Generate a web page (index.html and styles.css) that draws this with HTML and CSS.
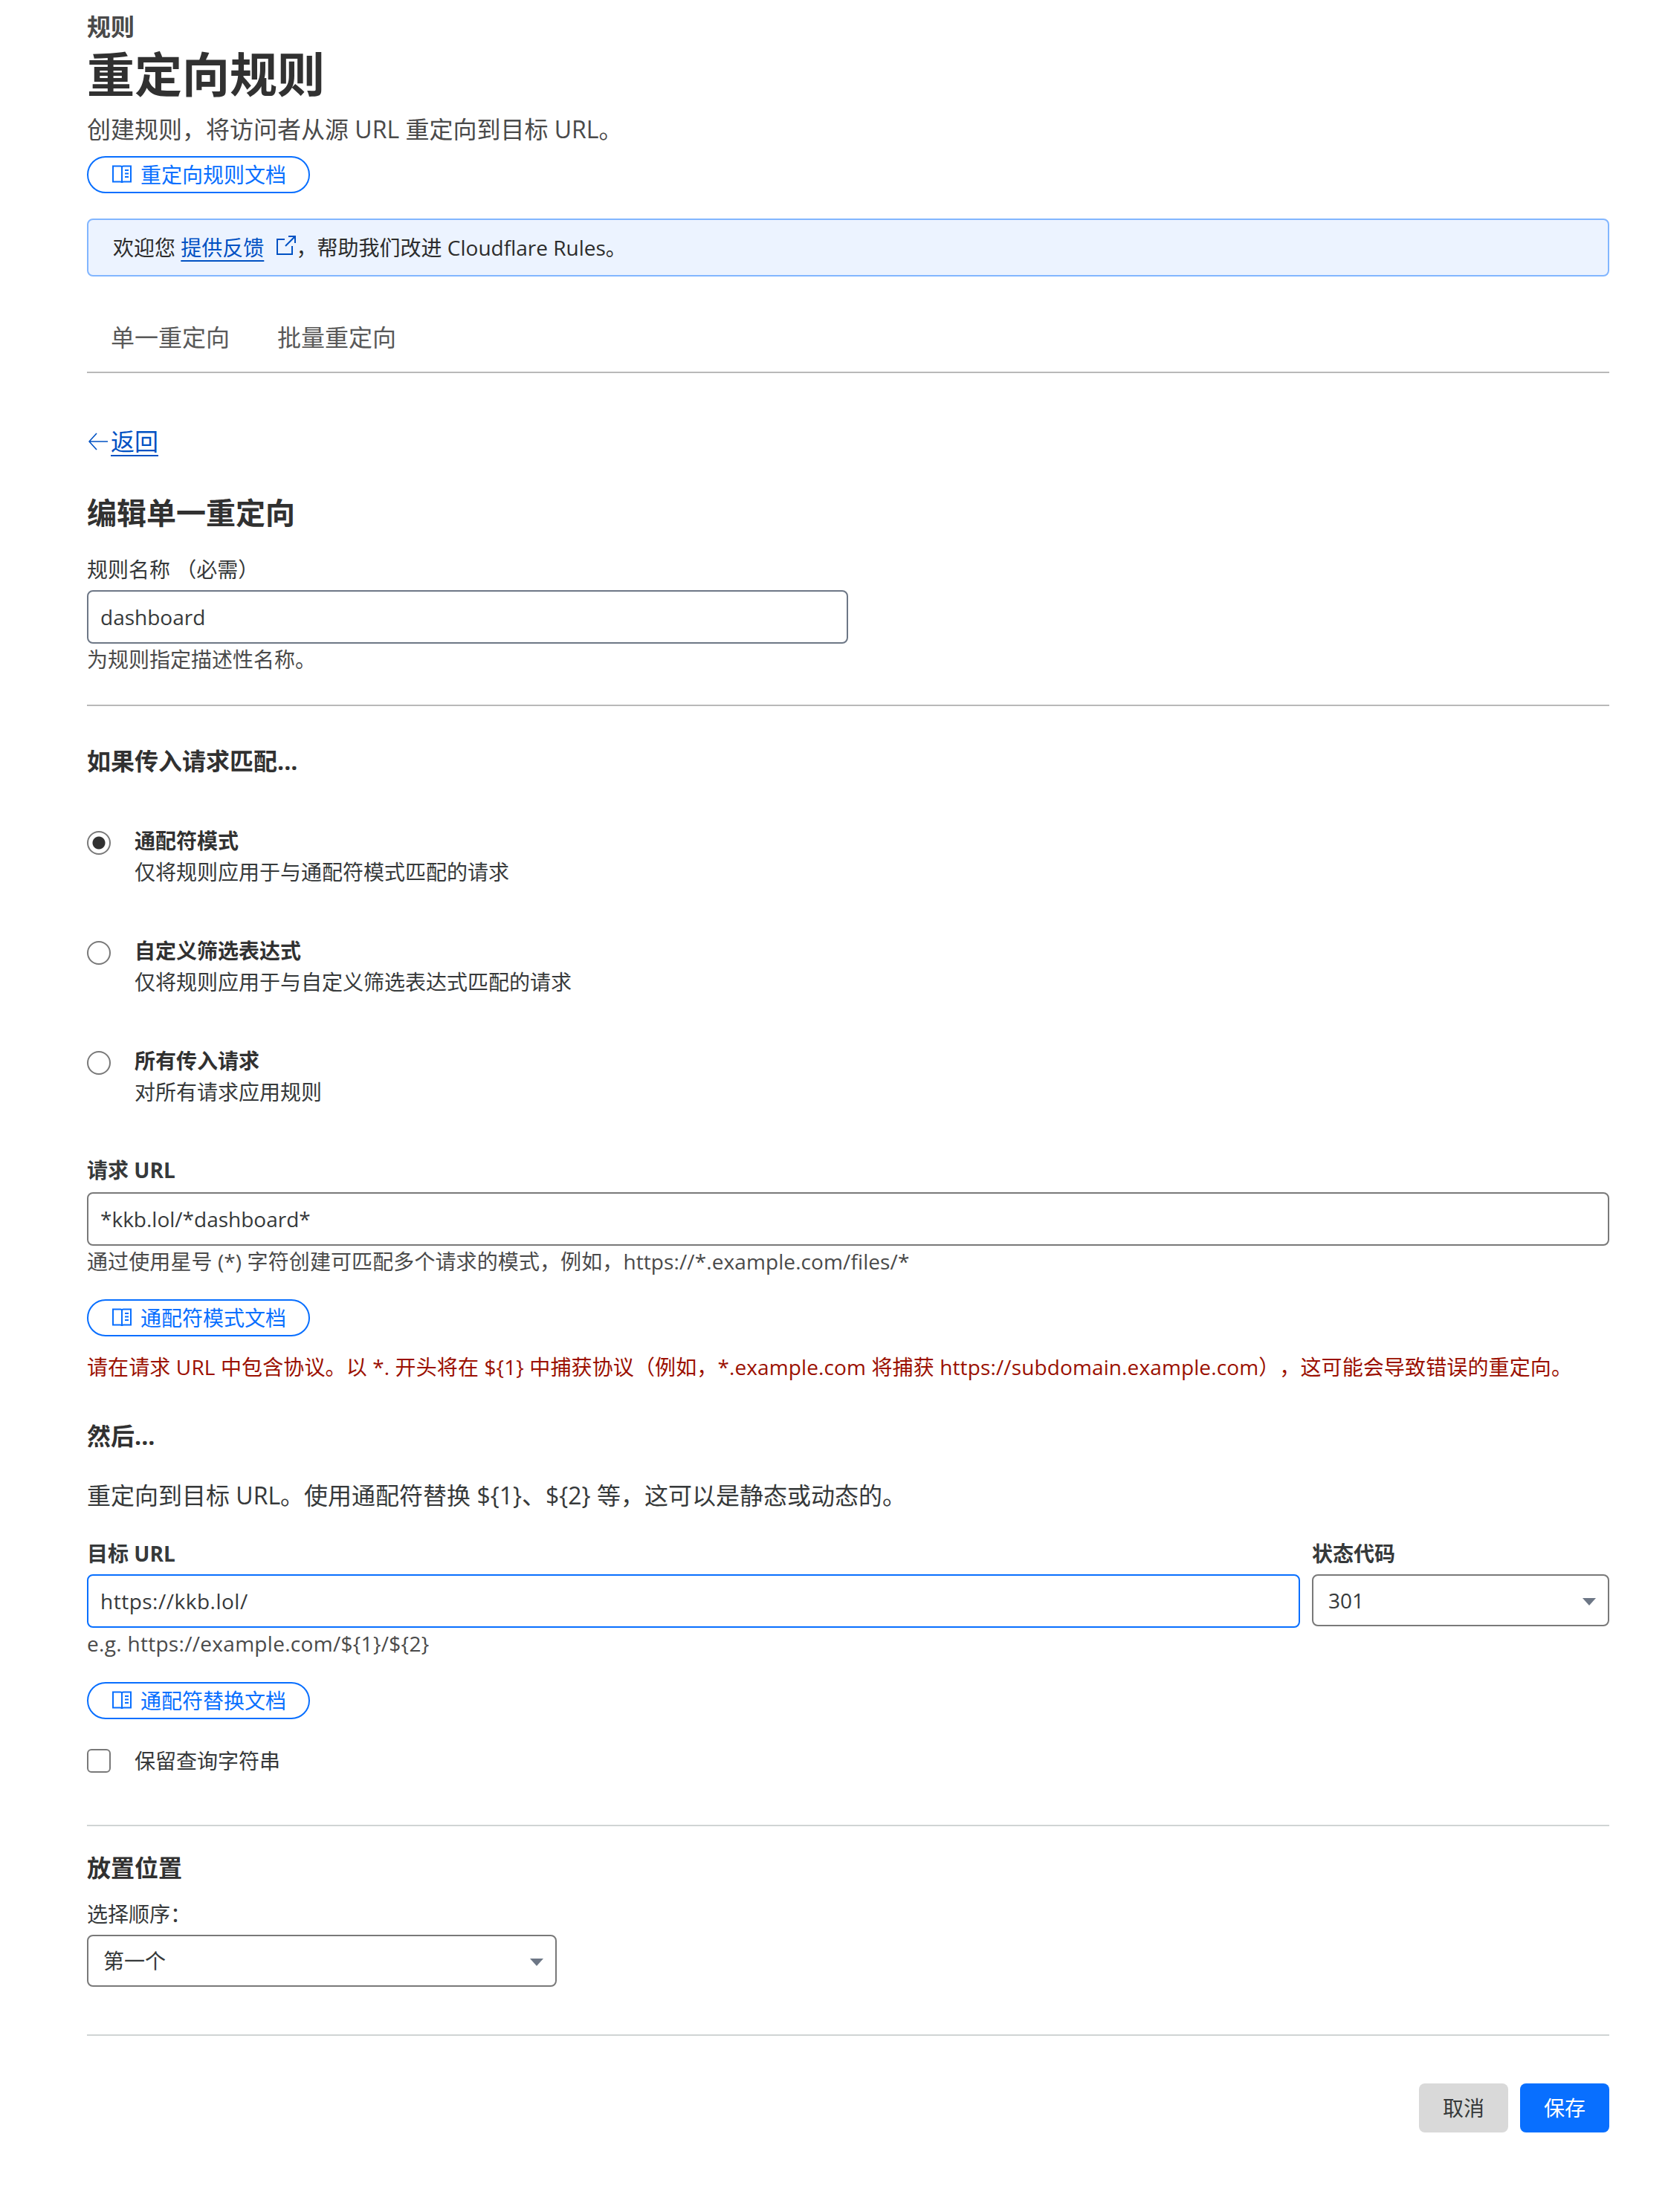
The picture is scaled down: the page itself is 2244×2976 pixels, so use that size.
FILE: index.html
```html
<!DOCTYPE html>
<html lang="zh">
<head>
    <meta charset="utf-8">
    <meta name="viewport" content="width=device-width, initial-scale=1">
    <title>重定向规则</title>
    <link rel="stylesheet" href="styles.css">
</head>
<body>
<div class="page">
    <div class="crumb">规则</div>
    <h1 class="title">重定向规则</h1>
    <p class="lead">创建规则，将访问者从源 URL 重定向到目标 URL。</p>
    <a class="pill pill-top" href="#">
        <svg class="book" viewBox="0 0 26 26"><path d="M1 1.5h10c1 0 2 .5 2 1.5 0-1 1-1.5 2-1.5h10v21H15c-1 0-2 .5-2 1.5 0-1-1-1.5-2-1.5H1zM13 3v21M17 7h5M17 11.5h5M17 16h5"/></svg>
        重定向规则文档
    </a>

    <div class="banner">
        欢迎您 <a class="link" href="#">提供反馈</a>
        <svg class="ext" viewBox="0 0 28 28"><path d="M12 6H2v20h20V15M17 2h9v9M26 2L13 15"/></svg>，帮助我们改进 Cloudflare Rules。
    </div>

    <div class="tabs">
        <span class="tab">单一重定向</span>
        <span class="tab">批量重定向</span>
    </div>

    <div class="back">
        <svg class="arrow" viewBox="0 0 26 26"><path d="M26 13H1M11 2L1 13l10 11"/></svg><a class="link" href="#">返回</a>
    </div>

    <h2 class="subtitle">编辑单一重定向</h2>

    <label class="field-label name-label">规则名称 （必需）</label>
    <input class="input name-input" type="text" value="dashboard">
    <p class="help">为规则指定描述性名称。</p>

    <hr class="rule rule-name">

    <h3 class="section">如果传入请求匹配...</h3>

    <div class="options">
        <div class="option">
            <span class="radio checked"></span>
            <div class="option-text">
                <div class="option-title">通配符模式</div>
                <div class="option-desc">仅将规则应用于与通配符模式匹配的请求</div>
            </div>
        </div>
        <div class="option">
            <span class="radio"></span>
            <div class="option-text">
                <div class="option-title">自定义筛选表达式</div>
                <div class="option-desc">仅将规则应用于与自定义筛选表达式匹配的请求</div>
            </div>
        </div>
        <div class="option">
            <span class="radio"></span>
            <div class="option-text">
                <div class="option-title">所有传入请求</div>
                <div class="option-desc">对所有请求应用规则</div>
            </div>
        </div>
    </div>

    <label class="field-label strong">请求 URL</label>
    <input class="input" type="text" value="*kkb.lol/*dashboard*">
    <p class="help help-wide">通过使用星号 (*) 字符创建可匹配多个请求的模式，例如，https://*.example.com/files/*</p>
    <a class="pill pill-mid" href="#">
        <svg class="book" viewBox="0 0 26 26"><path d="M1 1.5h10c1 0 2 .5 2 1.5 0-1 1-1.5 2-1.5h10v21H15c-1 0-2 .5-2 1.5 0-1-1-1.5-2-1.5H1zM13 3v21M17 7h5M17 11.5h5M17 16h5"/></svg>
        通配符模式文档
    </a>
    <p class="warning">请在请求 URL 中包含协议。以 *. 开头将在 ${1} 中捕获协议（例如，*.example.com 将捕获 https://subdomain.example.com），这可能会导致错误的重定向。</p>

    <h3 class="section then">然后...</h3>
    <p class="then-text">重定向到目标 URL。使用通配符替换 ${1}、${2} 等，这可以是静态或动态的。</p>

    <div class="target-row">
        <div class="target-col">
            <label class="field-label strong">目标 URL</label>
            <input class="input focused" type="text" value="https://kkb.lol/">
        </div>
        <div class="status-col">
            <label class="field-label strong">状态代码</label>
            <div class="select">301</div>
        </div>
    </div>
    <p class="help help-latin">e.g. https://example.com/${1}/${2}</p>
    <a class="pill pill-sub" href="#">
        <svg class="book" viewBox="0 0 26 26"><path d="M1 1.5h10c1 0 2 .5 2 1.5 0-1 1-1.5 2-1.5h10v21H15c-1 0-2 .5-2 1.5 0-1-1-1.5-2-1.5H1zM13 3v21M17 7h5M17 11.5h5M17 16h5"/></svg>
        通配符替换文档
    </a>

    <div class="check-row">
        <span class="checkbox"></span>
        <span>保留查询字符串</span>
    </div>

    <hr class="rule rule-check">

    <h3 class="section place">放置位置</h3>
    <label class="field-label order-label">选择顺序：</label>
    <div class="select order-select">第一个</div>

    <hr class="rule rule-order">

    <div class="actions">
        <button class="btn btn-cancel" type="button">取消</button>
        <button class="btn btn-save" type="button">保存</button>
    </div>
</div>
</body>
</html>
```

FILE: styles.css
```css
*
{
  box-sizing: border-box;
}

body
{
  margin: 0;
  background: #fff;
  color: #36393a;
  font-family: "Open Sans", "Noto Sans CJK SC", sans-serif;
  font-size: 28px;
  line-height: 40px;
}

.page
{
  width: 2048px;
  margin-left: 117px;
  padding-top: 16px;
  padding-bottom: 60px;
}

.crumb
{
  font-size: 32px;
  font-weight: 700;
  line-height: 40px;
  color: #4a4a4a;
}

.title
{
  margin: 0;
  padding-top: 4px;
  font-size: 64px;
  font-weight: 700;
  line-height: 80px;
  color: #313131;
}

.lead
{
  margin: 10px 0 0;
  font-size: 32px;
  line-height: 48px;
  color: #4a4a4a;
}

.pill
{
  display: flex;
  align-items: center;
  gap: 12px;
  width: 300px;
  height: 50px;
  padding-left: 32px;
  border: 2px solid #086fff;
  border-radius: 25px;
  color: #086fff;
  text-decoration: none;
}

.pill-top
{
  margin-top: 12px;
}

.pill-mid
{
  margin-top: 30px;
}

.pill-sub
{
  margin-top: 31px;
}

.book
{
  width: 26px;
  height: 26px;
  fill: none;
  stroke: #086fff;
  stroke-width: 2;
}

.banner
{
  height: 78px;
  margin-top: 34px;
  padding-left: 33px;
  border: 2px solid #82b6ff;
  border-radius: 8px;
  background: #ecf3ff;
  line-height: 74px;
  color: #2c2c2c;
}

.link
{
  color: #0051c3;
  text-decoration: underline;
  text-decoration-thickness: 2px;
  text-underline-offset: 6px;
}

.ext
{
  width: 28px;
  height: 28px;
  margin: 0 0 0 8px;
  fill: none;
  stroke: #0051c3;
  stroke-width: 2;
}

.tabs
{
  display: flex;
  gap: 64px;
  height: 130px;
  padding: 62px 0 0 32px;
  border-bottom: 2px solid #b9b9b9;
  font-size: 32px;
  line-height: 40px;
  color: #595959;
}

.back
{
  display: flex;
  align-items: center;
  margin-top: 70px;
  font-size: 32px;
  line-height: 44px;
}

.arrow
{
  width: 26px;
  height: 26px;
  margin: 0 4px 0 2px;
  fill: none;
  stroke: #0051c3;
  stroke-width: 1.6;
}

.subtitle
{
  margin: 44px 0 0;
  font-size: 40px;
  font-weight: 700;
  line-height: 60px;
  color: #313131;
}

.field-label
{
  display: block;
  line-height: 40px;
}

.strong
{
  font-weight: 700;
}

.name-label
{
  margin-top: 26px;
  margin-bottom: 8px;
}

.input
{
  display: block;
  width: 100%;
  height: 72px;
  padding: 0 16px;
  border: 2px solid #797979;
  border-radius: 8px;
  background: #fff;
  color: #36393a;
  font: inherit;
  outline: none;
}

.name-input
{
  width: 1024px;
  border-color: #6d7786;
}

.focused
{
  border-color: #086fff;
  letter-spacing: .5px;
}

.help
{
  margin: 0;
  line-height: 42px;
  color: #4a4a4a;
}

.help-wide
{
  letter-spacing: .1px;
}

.help-latin
{
  letter-spacing: .3px;
}

.rule
{
  height: 2px;
  margin: 0;
  border: 0;
  background: #d0d4d4;
}

.rule-name
{
  margin-top: 40px;
  background: #b9b9b9;
}

.section
{
  margin: 50px 0 0;
  font-size: 32px;
  font-weight: 700;
  line-height: 48px;
  color: #313131;
}

.options
{
  display: flex;
  flex-direction: column;
  gap: 64px;
  margin-top: 60px;
}

.option
{
  display: flex;
  gap: 32px;
  height: 84px;
}

.option-text
{
  padding-top: 2px;
}

.radio
{
  flex: none;
  width: 32px;
  height: 32px;
  margin-top: 10px;
  border: 2px solid #797979;
  border-radius: 50%;
  background: #fff;
}

.radio.checked
{
  background: radial-gradient(circle, #313131 0, #313131 8px, #fff 9px);
}

.option-title
{
  font-weight: 700;
  line-height: 42px;
  color: #313131;
}

.option-desc
{
  line-height: 42px;
  color: #36393a;
}

.options + .strong
{
  margin-top: 66px;
  margin-bottom: 10px;
}

.warning
{
  margin: 20px 0 0;
  line-height: 42px;
  white-space: nowrap;
  letter-spacing: .12px;
  text-spacing-trim: space-all;
  color: #9b1000;
}

.then
{
  margin-top: 48px;
}

.then-text
{
  margin: 32px 0 0;
  font-size: 32px;
  line-height: 48px;
  color: #36393a;
}

.target-row
{
  display: flex;
  gap: 16px;
  margin-top: 34px;
}

.target-col
{
  flex: 1;
}

.status-col
{
  width: 400px;
}

.target-row .field-label
{
  margin-bottom: 8px;
}

.select
{
  position: relative;
  height: 70px;
  padding: 0 20px;
  border: 2px solid #797979;
  border-radius: 8px;
  background: #fff;
  line-height: 66px;
}

.select::after
{
  content: "";
  position: absolute;
  top: 30px;
  right: 16px;
  border-top: 10px solid #6d7786;
  border-left: 9px solid transparent;
  border-right: 9px solid transparent;
}

.check-row
{
  display: flex;
  align-items: center;
  gap: 32px;
  margin-top: 36px;
}

.checkbox
{
  width: 32px;
  height: 32px;
  border: 2px solid #797979;
  border-radius: 6px;
  background: #fff;
}

.rule-check
{
  margin-top: 66px;
}

.place
{
  margin-top: 32px;
}

.order-label
{
  margin-top: 18px;
  margin-bottom: 8px;
}

.order-select
{
  width: 632px;
}

.rule-order
{
  margin-top: 64px;
}

.actions
{
  display: flex;
  justify-content: flex-end;
  gap: 16px;
  margin-top: 64px;
}

.btn
{
  width: 120px;
  height: 66px;
  border: 0;
  border-radius: 8px;
  font: inherit;
}

.btn-cancel
{
  background: #d9d9d9;
  color: #36393a;
}

.btn-save
{
  background: #086fff;
  color: #fff;
}
```
